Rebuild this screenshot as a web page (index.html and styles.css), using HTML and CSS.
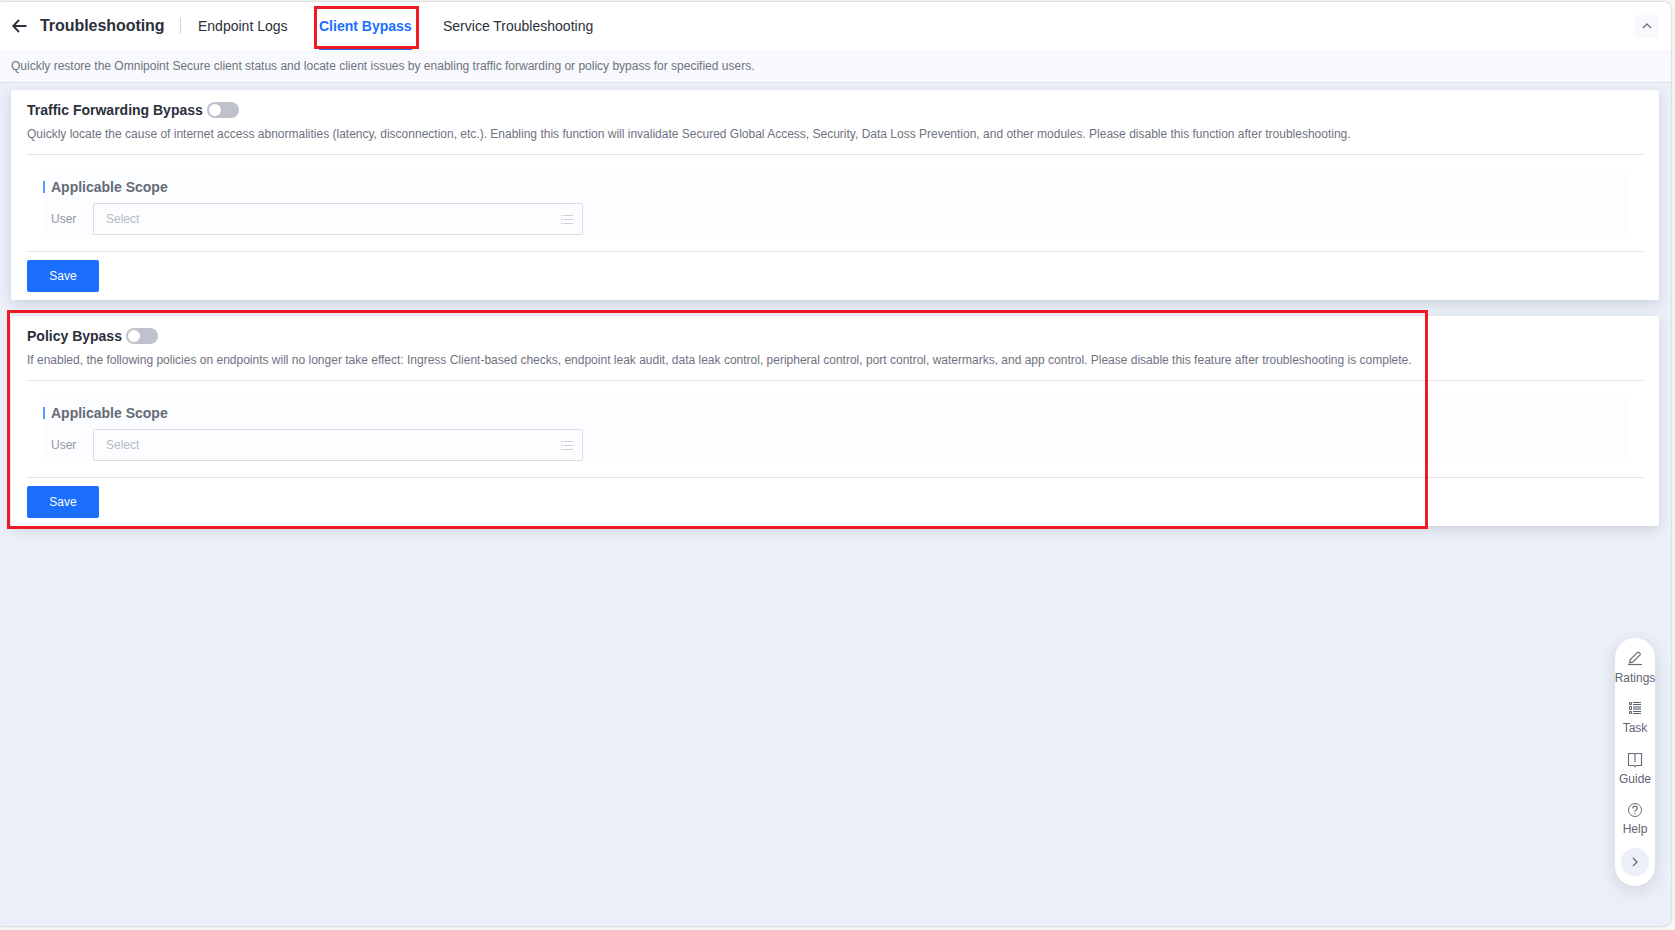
FILE: index.html
```html
<!DOCTYPE html>
<html lang="en">
<head>
    <meta charset="UTF-8">
    <meta name="viewport" content="width=device-width, initial-scale=1.0">
    <title>Troubleshooting</title>
    <link rel="stylesheet" href="styles.css">
</head>
<body>
    <div class="page">
        <header class="header">
            <a href="#" class="back">
                <svg width="16" height="14" viewBox="0 0 16 14" fill="none" stroke="#2b303b" stroke-width="1.8"><path d="M8 1L2.2 7 8 13M2.2 7h13.3"/></svg>
            </a>
            <h1>Troubleshooting</h1>
            <nav class="tabs">
                <a href="#" class="tab tab-logs">Endpoint Logs</a>
                <a href="#" class="tab tab-bypass active">Client Bypass<span class="mark mark-tab"></span></a>
                <a href="#" class="tab tab-service">Service Troubleshooting</a>
            </nav>
            <button class="collapse">
                <svg width="10" height="6" viewBox="0 0 10 6" fill="none" stroke="#6b6f7a" stroke-width="1.3"><path d="M1 5l4-4 4 4"/></svg>
            </button>
        </header>
        <p class="tip">Quickly restore the Omnipoint Secure client status and locate client issues by enabling traffic forwarding or policy bypass for specified users.</p>
        <main>
            <section class="card">
                <div class="card-title">
                    <h2 class="title-traffic">Traffic Forwarding Bypass</h2>
                    <span class="switch"></span>
                </div>
                <p class="desc">Quickly locate the cause of internet access abnormalities (latency, disconnection, etc.). Enabling this function will invalidate Secured Global Access, Security, Data Loss Prevention, and other modules. Please disable this function after troubleshooting.</p>
                <div class="card-body">
                    <div class="scope">
                        <h3>Applicable Scope</h3>
                        <div class="field">
                            <label>User</label>
                            <div class="select">
                                <span>Select</span>
                                <svg width="12" height="9" viewBox="0 0 12 9" stroke="#cfd1d6"><path d="M0 .5h2M3 .5h9M0 4.5h2M3 4.5h9M0 8.5h2M3 8.5h9"/></svg>
                            </div>
                        </div>
                    </div>
                </div>
                <button class="save">Save</button>
            </section>
            <section class="card">
                <div class="card-title">
                    <h2 class="title-policy">Policy Bypass</h2>
                    <span class="switch"></span>
                </div>
                <p class="desc">If enabled, the following policies on endpoints will no longer take effect: Ingress Client-based checks, endpoint leak audit, data leak control, peripheral control, port control, watermarks, and app control. Please disable this feature after troubleshooting is complete.</p>
                <div class="card-body">
                    <div class="scope">
                        <h3>Applicable Scope</h3>
                        <div class="field">
                            <label>User</label>
                            <div class="select">
                                <span>Select</span>
                                <svg width="12" height="9" viewBox="0 0 12 9" stroke="#cfd1d6"><path d="M0 .5h2M3 .5h9M0 4.5h2M3 4.5h9M0 8.5h2M3 8.5h9"/></svg>
                            </div>
                        </div>
                    </div>
                </div>
                <button class="save">Save</button>
                <span class="mark mark-card"></span>
            </section>
        </main>
        <aside class="toolbar">
            <a href="#" class="tool">
                <svg width="16" height="16" viewBox="0 0 16 16" fill="none" stroke="#666c7a" stroke-width="1.2"><path d="M1 13.5h14"/><path d="M2.5 11.8l.7-3.2 7.4-7.2q.6-.5 1.2 0l1.3 1.3q.5.6 0 1.2l-7.400 7.200z"/></svg>
                <span>Ratings</span>
            </a>
            <a href="#" class="tool">
                <svg width="16" height="16" viewBox="0 0 16 16" fill="none" stroke="#59616e"><path d="M2.500 1.500h2v2h-2zM2.500 5.500h2v3h-2zM2.500 10.500h2v2h-2z"/><path d="M6 1.500h8M6 3.500h8M6 10.500h8M6 12.500h8"/><path d="M6 7h8" stroke="#a3a8b0" stroke-width="4"/></svg>
                <span>Task</span>
            </a>
            <a href="#" class="tool">
                <svg width="16" height="16" viewBox="0 0 16 16" fill="none" stroke="#666c7a" stroke-width="1.1"><path d="M1.500 13.500v-12H6q1.500 0 2 1 .5-1 2-1h4.500v12H10q-1.500 0-2 1-.5-1-2-1zM8 2v8"/></svg>
                <span>Guide</span>
            </a>
            <a href="#" class="tool">
                <svg width="16" height="16" viewBox="0 0 16 16" fill="none" stroke="#666c7a"><circle cx="8" cy="8" r="6.5"/><path d="M5.800 6.500q0-2.300 2.200-2.300t2.200 2q0 1-1.100 1.700T8 9.700" stroke-width="1.2"/><path d="M8 10.900v1.300" stroke-width="1.3"/></svg>
                <span>Help</span>
            </a>
            <button class="more">
                <svg width="6" height="10" viewBox="0 0 6 10" fill="none" stroke="#666c7a" stroke-width="1.3"><path d="M1 1l4 4-4 4"/></svg>
            </button>
        </aside>
    </div>
</body>
</html>
```
FILE: styles.css
```css
* {
    box-sizing: border-box;
    margin: 0;
    padding: 0;
}

body {
    height: 930px;
    padding: 2px 4px 4px 0;
    background: #f7f7f7;
    font-family: "Liberation Sans", Arial, sans-serif;
    font-size: 12px;
    color: #2b303b;
    overflow: hidden;
}

a {
    color: inherit;
    text-decoration: none;
}

button {
    border: none;
    font-family: inherit;
    cursor: pointer;
}

svg {
    display: block;
}

.page {
    position: relative;
    height: 924px;
    background: #ebeff8;
    border-radius: 0 8px 8px 0;
    box-shadow: 0 0 3px rgba(0, 0, 0, 0.25);
}

.header {
    display: flex;
    align-items: center;
    height: 48px;
    padding: 0 12px 0 11px;
    background: #fff;
    border-radius: 0 8px 0 0;
}

.back {
    width: 29px;
}

.header h1 {
    width: 124px;
    font-size: 16px;
    line-height: 24px;
    letter-spacing: -0.05px;
    white-space: nowrap;
}

.tabs {
    display: flex;
    align-items: center;
    gap: 31px;
    height: 48px;
    margin-left: 16px;
}

.tabs::before {
    content: "";
    width: 1px;
    height: 16px;
    margin-right: -14px;
    background: #d0d4de;
}

.tab {
    position: relative;
    font-size: 14px;
    line-height: 48px;
    white-space: nowrap;
}

.tab-logs {
    width: 90px;
}

.tab-bypass {
    width: 93px;
}

.tab.active {
    color: #1c6eff;
    font-weight: bold;
}

.tab.active::after {
    content: "";
    position: absolute;
    left: 0;
    right: 0;
    bottom: 0;
    height: 2px;
    background: #1c6eff;
}

.mark {
    position: absolute;
    border: 3px solid #ed1c24;
    z-index: 1;
}

.mark-tab {
    left: -5px;
    top: 4px;
    width: 105px;
    height: 43px;
}

.mark-card {
    left: -4px;
    top: -6px;
    width: 1421px;
    height: 219px;
}

.collapse {
    display: flex;
    align-items: center;
    justify-content: center;
    width: 24px;
    height: 23px;
    margin-left: auto;
    background: #f7f9fd;
    border-radius: 2px;
}

.tip {
    height: 33px;
    padding-left: 11px;
    border-bottom: 1px solid #dee0e8;
    background: #f7f9fd;
    color: #6e737f;
    line-height: 33px;
    white-space: nowrap;
}

main {
    display: flex;
    flex-direction: column;
    gap: 16px;
    padding: 7px 12px 0 11px;
}

.card {
    position: relative;
    height: 210px;
    padding: 8px 16px;
    background: #fff;
    border-radius: 2px;
    box-shadow: 0 4px 12px rgba(50, 65, 80, 0.16);
}

.card-title {
    display: flex;
    align-items: center;
    gap: 5px;
    height: 24px;
}

.card-title h2 {
    font-size: 14px;
    white-space: nowrap;
}

.title-traffic {
    width: 175px;
}

.title-policy {
    width: 94px;
}

.switch {
    width: 32px;
    height: 16px;
    padding: 2px;
    background: #bfc2cc;
    border-radius: 8px;
}

.switch::before {
    content: "";
    display: block;
    width: 12px;
    height: 12px;
    background: #fff;
    border-radius: 50%;
}

.desc {
    height: 32px;
    color: #6e737f;
    line-height: 24px;
    white-space: nowrap;
}

.card-body {
    height: 98px;
    padding: 16px;
    border-top: 1px solid #dfe1e8;
    border-bottom: 1px solid #dfe1e8;
}

.scope {
    height: 64px;
    background: #fbfdff;
}

.scope h3 {
    display: flex;
    align-items: center;
    gap: 6px;
    height: 32px;
    color: #666b76;
    font-size: 14px;
}

.scope h3::before {
    content: "";
    width: 2px;
    height: 12px;
    background: #5c98ff;
}

.field {
    display: flex;
    align-items: center;
    padding-left: 8px;
}

.field label {
    width: 42px;
    color: #9296a0;
}

.select {
    display: flex;
    align-items: center;
    justify-content: space-between;
    width: 490px;
    height: 32px;
    padding: 0 9px 0 12px;
    border: 1px solid #d9dce5;
    border-radius: 2px;
    color: #b6bac5;
}

.save {
    display: block;
    width: 72px;
    height: 32px;
    margin-top: 8px;
    background: #1c6eff;
    border-radius: 2px;
    color: #fff;
    font-size: 12px;
}

.toolbar {
    position: absolute;
    top: 636px;
    right: 16px;
    display: flex;
    flex-direction: column;
    align-items: center;
    width: 40px;
    height: 248px;
    padding-top: 13px;
    background: #fff;
    border-radius: 20px;
    box-shadow: 0 4px 16px rgba(50, 65, 80, 0.16);
}

.tool {
    display: flex;
    flex-direction: column;
    align-items: center;
    height: 50.4px;
    color: #5f6573;
    line-height: 23px;
}

.more {
    display: flex;
    align-items: center;
    justify-content: center;
    width: 28px;
    height: 28px;
    margin-top: -4.6px;
    background: #ebeff8;
    border-radius: 50%;
}
```
